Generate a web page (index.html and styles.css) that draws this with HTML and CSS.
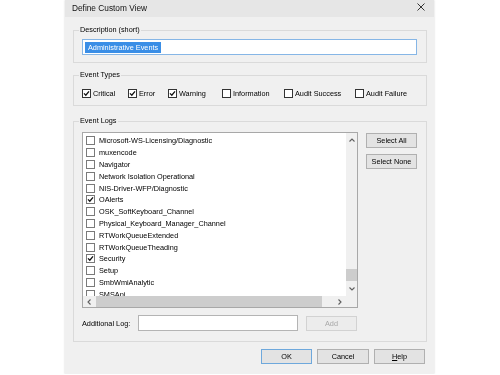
FILE: index.html
```html
<!DOCTYPE html>
<html lang="en">
<head>
    <meta charset="UTF-8">
    <title>Define Custom View</title>
    <link rel="stylesheet" href="styles.css">
</head>
<body>

    <div class="dialog">
        <div class="titlebar">
            <span class="title">Define Custom View</span>
            <svg class="close" width="8" height="8" viewBox="0 0 8 8">
                <path d="M0.5 0.5 L7.5 7.5 M7.5 0.5 L0.5 7.5" stroke="#333" stroke-width="1" fill="none"/>
            </svg>
        </div>

        <div class="body">
            <fieldset class="group">
                <legend>Description (short)</legend>
                <div class="group-inner desc">
                    <div class="textbox focused"><span class="sel">Administrative Events</span></div>
                </div>
            </fieldset>

            <fieldset class="group">
                <legend>Event Types</legend>
                <div class="group-inner types">
                    <label class="check"><span class="box"><svg viewBox="0 0 7 7"><path d="M1 3.4 L2.8 5.2 L6 1.4"/></svg></span>Critical</label>
                    <label class="check"><span class="box"><svg viewBox="0 0 7 7"><path d="M1 3.4 L2.8 5.2 L6 1.4"/></svg></span>Error</label>
                    <label class="check"><span class="box"><svg viewBox="0 0 7 7"><path d="M1 3.4 L2.8 5.2 L6 1.4"/></svg></span>Warning</label>
                    <label class="check"><span class="box"></span>Information</label>
                    <label class="check"><span class="box"></span>Audit Success</label>
                    <label class="check"><span class="box"></span>Audit Failure</label>
                </div>
            </fieldset>

            <fieldset class="group">
                <legend>Event Logs</legend>
                <div class="group-inner logs">
                    <div class="logs-row">
                        <div class="listbox">
                            <div class="items">
                                <div class="item"><span class="box"></span>Microsoft-WS-Licensing/Diagnostic</div>
                                <div class="item"><span class="box"></span>muxencode</div>
                                <div class="item"><span class="box"></span>Navigator</div>
                                <div class="item"><span class="box"></span>Network Isolation Operational</div>
                                <div class="item"><span class="box"></span>NIS-Driver-WFP/Diagnostic</div>
                                <div class="item"><span class="box"><svg viewBox="0 0 7 7"><path d="M1 3.4 L2.8 5.2 L6 1.4"/></svg></span>OAlerts</div>
                                <div class="item"><span class="box"></span>OSK_SoftKeyboard_Channel</div>
                                <div class="item"><span class="box"></span>Physical_Keyboard_Manager_Channel</div>
                                <div class="item"><span class="box"></span>RTWorkQueueExtended</div>
                                <div class="item"><span class="box"></span>RTWorkQueueTheading</div>
                                <div class="item"><span class="box"><svg viewBox="0 0 7 7"><path d="M1 3.4 L2.8 5.2 L6 1.4"/></svg></span>Security</div>
                                <div class="item"><span class="box"></span>Setup</div>
                                <div class="item"><span class="box"></span>SmbWmiAnalytic</div>
                                <div class="item"><span class="box"></span>SMSApi</div>
                            </div>
                            <div class="vscroll">
                                <div class="arrow"><svg width="6" height="4" viewBox="0 0 6 4"><path d="M0.5 3.5 L3 1 L5.5 3.5"/></svg></div>
                                <div class="track"><div class="thumb"></div></div>
                                <div class="arrow"><svg width="6" height="4" viewBox="0 0 6 4"><path d="M0.5 0.5 L3 3 L5.5 0.5"/></svg></div>
                            </div>
                            <div class="hscroll">
                                <div class="arrow"><svg width="4" height="6" viewBox="0 0 4 6"><path d="M3.5 0.5 L1 3 L3.5 5.5"/></svg></div>
                                <div class="track"><div class="thumb"></div></div>
                                <div class="arrow"><svg width="4" height="6" viewBox="0 0 4 6"><path d="M0.5 0.5 L3 3 L0.5 5.5"/></svg></div>
                            </div>
                            <div class="corner"></div>
                        </div>
                        <div class="side-buttons">
                            <button class="btn">Select All</button>
                            <button class="btn">Select None</button>
                        </div>
                    </div>
                    <div class="extra-row">
                        <span class="extra-label">Additional Log:</span>
                        <div class="textbox extra-input"></div>
                        <button class="btn" disabled>Add</button>
                    </div>
                </div>
            </fieldset>

            <div class="footer">
                <button class="btn default">OK</button>
                <button class="btn">Cancel</button>
                <button class="btn"><u>H</u>elp</button>
            </div>
        </div>
    </div>

</body>
</html>
```

FILE: styles.css
```css
* {
    margin: 0;
    padding: 0;
    box-sizing: border-box;
}

body {
    font-family: 'Liberation Sans', Arial, sans-serif;
    font-size: 7.3px;
    color: #000;
    background-color: #fff;
}

.dialog {
    margin-left: 65px;
    width: 369px;
    height: 374px;
    background-color: #f0f0f0;
    box-shadow: 0 0 2px rgba(0, 0, 0, 0.18);
    /* keeps the small text greyscale instead of coloured subpixel AA */
    will-change: transform;
}

.titlebar {
    height: 17px;
    background-color: #e6e6e6;
    display: flex;
    align-items: center;
    justify-content: space-between;
    padding: 0 9px 1px 7px;
}

.title {
    font-size: 8.3px;
    color: #111;
}

.close {
    display: block;
    margin-top: -2px;
}

.body {
    padding: 8px 7px 0 8px;
}

.group {
    border: 1px solid #dadada;
    min-width: 0;
    margin-bottom: 7px;
}

.group:nth-of-type(2) {
    margin-bottom: 10px;
}

.group legend {
    margin-left: 5px;
    padding: 0 1px;
    line-height: 10px;
}

.group-inner {
    padding-left: 8px;
    padding-right: 9px;
}

.desc {
    padding-top: 4px;
    padding-bottom: 7px;
}

.textbox {
    height: 16px;
    background-color: #fff;
    border: 1px solid #b4b4b4;
    display: flex;
    align-items: center;
    padding-left: 2px;
}

.textbox.focused {
    border-color: #86b6e6;
}

.sel {
    background-color: #3a8ee6;
    color: #fff;
    line-height: 11px;
    padding: 0 3px;
}

.types {
    display: grid;
    grid-template-columns: 46px 40px 54px 62px 71px auto;
    padding-top: 8px;
    padding-bottom: 7px;
}

.check {
    display: flex;
    align-items: center;
    height: 10px;
    gap: 2px;
}

.box {
    width: 9px;
    height: 9px;
    flex: none;
    background-color: #fff;
    border: 1px solid #333;
    display: flex;
}

.box svg {
    width: 7px;
    height: 7px;
}

.box path {
    fill: none;
    stroke: #111;
    stroke-width: 1.3;
}

.logs {
    padding-top: 6px;
    padding-bottom: 10px;
}

.logs-row {
    display: flex;
    gap: 8px;
}

.listbox {
    width: 276px;
    height: 176px;
    border: 1px solid #a8a8a8;
    background-color: #fff;
    display: grid;
    grid-template-columns: 1fr 11px;
    grid-template-rows: 1fr 11px;
}

.items {
    overflow: hidden;
    padding: 2px 0 0 3px;
}

.item {
    display: flex;
    align-items: center;
    height: 11.8px;
    gap: 4px;
    white-space: nowrap;
}

.item .box {
    border-color: #7a7a7a;
}

.vscroll {
    background-color: #f0f0f0;
    display: flex;
    flex-direction: column;
}

.vscroll .arrow {
    height: 14px;
    display: flex;
    align-items: center;
    justify-content: center;
}

.vscroll .track {
    flex: 1;
    display: flex;
    flex-direction: column;
    justify-content: flex-end;
    padding-bottom: 1px;
}

.vscroll .thumb {
    height: 12px;
    background-color: #cdcdcd;
}

.hscroll {
    background-color: #f0f0f0;
    display: flex;
}

.hscroll .arrow {
    width: 12px;
    display: flex;
    align-items: center;
    justify-content: center;
}

.hscroll .track {
    flex: 1;
    padding-left: 1px;
}

.hscroll .thumb {
    width: 226px;
    height: 100%;
    background-color: #cdcdcd;
}

.arrow path {
    fill: none;
    stroke: #606060;
    stroke-width: 1.1;
}

.corner {
    background-color: #f0f0f0;
}

.side-buttons {
    display: flex;
    flex-direction: column;
    gap: 6px;
    padding-top: 1px;
}

.btn {
    width: 51px;
    height: 15px;
    font-family: inherit;
    font-size: 7.3px;
    color: #000;
    background-color: #e3e3e3;
    border: 1px solid #b0b0b0;
}

.btn:disabled {
    color: #a8a8a8;
    background-color: #ececec;
    border-color: #d2d2d2;
}

.btn.default {
    border-color: #6ea8dc;
}

.extra-row {
    display: flex;
    align-items: center;
    margin-top: 7px;
}

.extra-label {
    width: 56px;
}

.extra-input {
    width: 160px;
    height: 16px;
    margin-right: 8px;
}

.footer {
    display: flex;
    justify-content: flex-end;
    gap: 5px;
    margin-top: 2px;
    margin-right: 2px;
}

.footer .btn:nth-child(2) {
    width: 52px;
}
```
